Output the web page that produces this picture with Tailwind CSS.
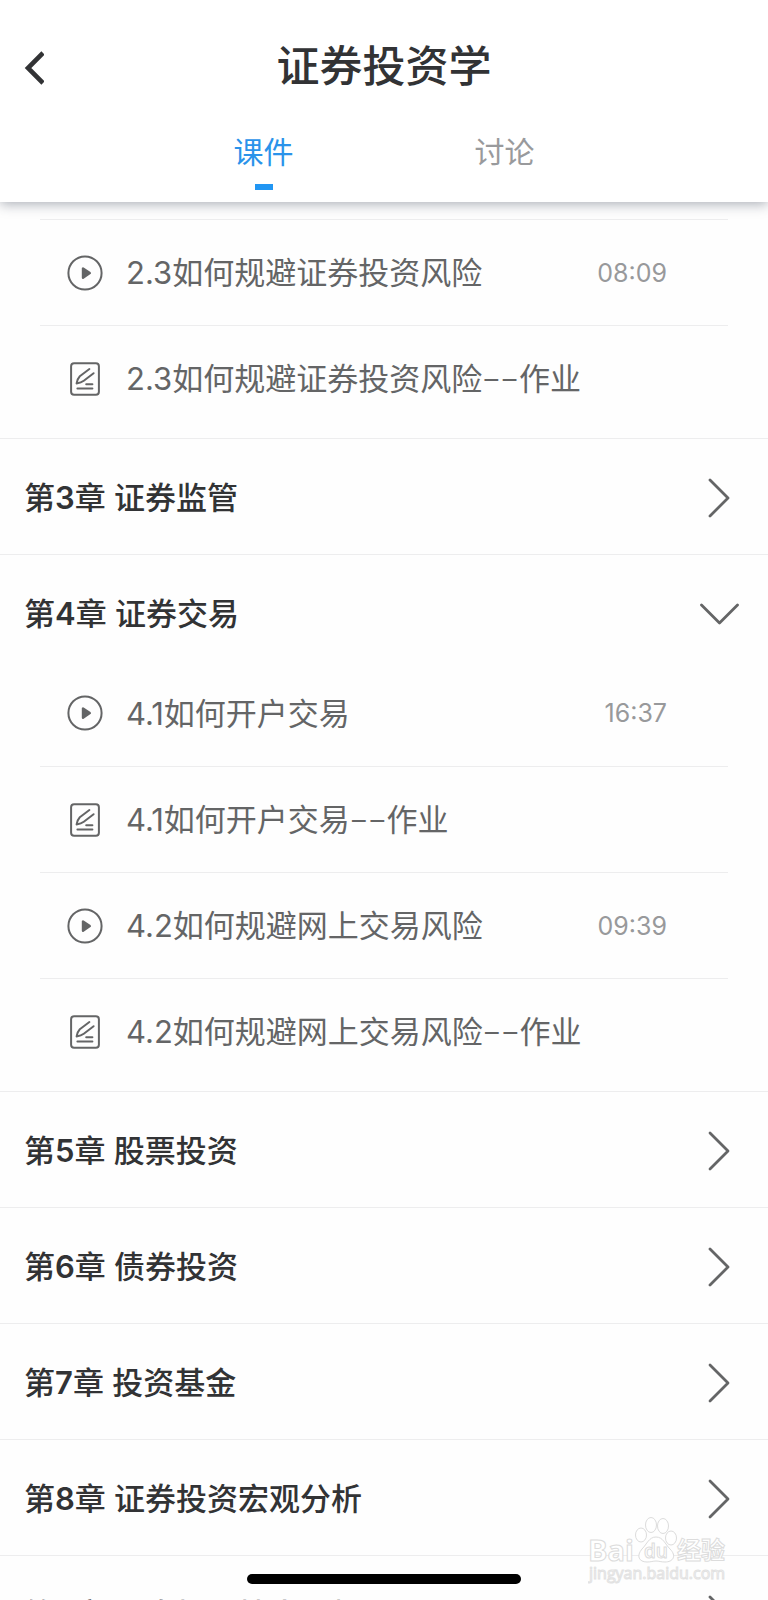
<!DOCTYPE html>
<html lang="zh-CN">
<head>
    <meta charset="UTF-8">
    <meta name="viewport" content="width=device-width, initial-scale=1.0">
    <title>证券投资学</title>
    <script src="https://cdn.jsdelivr.net/npm/@tailwindcss/browser@4"></script>
</head>
<body class="relative flex flex-col h-screen overflow-hidden bg-[#fefefe] font-['Inter','Noto_Sans_CJK_SC',sans-serif] text-[#646566]">

    <!-- Icons -->
    <svg class="hidden">
        <symbol id="icon-play" viewBox="0 0 36 36">
            <circle cx="18" cy="18" r="16.6" fill="none" stroke="currentColor" stroke-width="2" />
            <path d="M16 13.4v9.4l6.8-4.7z" fill="currentColor" stroke="currentColor" stroke-width="2.4" stroke-linejoin="round" />
        </symbol>
        <symbol id="icon-work" viewBox="0 0 36 36">
            <g fill="none" stroke="currentColor" stroke-width="2" stroke-linecap="round" stroke-linejoin="round">
                <rect x="4.1" y="2.3" width="27.8" height="31.4" rx="3" />
                <path d="M22.4 8L12.8 15.2Q10.6 17.5 9.6 22.4Q14.2 21.8 16.8 19.8L26.6 12.2M19.2 23.3H25.4M10.4 27.4H25.4" />
            </g>
        </symbol>
        <symbol id="icon-right" viewBox="0 0 40 40">
            <path d="M10 2L28 20L10 38" fill="none" stroke="currentColor" stroke-width="2.8" stroke-linecap="round" stroke-linejoin="round" />
        </symbol>
        <symbol id="icon-down" viewBox="0 0 40 40">
            <path d="M1.5 11L19.5 29L37.5 11" fill="none" stroke="currentColor" stroke-width="2.8" stroke-linecap="round" stroke-linejoin="round" />
        </symbol>
    </svg>

    <!-- Header -->
    <header class="relative z-10 shrink-0 bg-white pt-9 shadow-[0_2px_12px_rgba(40,50,70,0.4)]">
        <div class="grid grid-cols-[72px_1fr_72px] items-center h-15">
            <button type="button" aria-label="返回" class="pl-6 pt-1 text-[#323335]">
                <svg class="w-5 h-9" viewBox="0 0 20 36" fill="none" stroke="currentColor" stroke-width="4.6">
                    <path d="M19 3L4 18L19 33" />
                </svg>
            </button>
            <h1 class="text-center text-[43px] leading-15 font-medium text-[#323335]">证券投资学</h1>
        </div>
        <nav class="flex justify-center pt-8 pb-3">
            <a href="#course" class="flex flex-col items-center w-[241px] text-[30px] leading-12 text-[#2a93ea]">
                课件
                <span class="mt-2 w-[18px] h-1.5 bg-[#2196f3]"></span>
            </a>
            <a href="#discuss" class="w-[241px] text-center text-[30px] leading-12 text-[#999a9c]">讨论</a>
        </nav>
    </header>

    <!-- Chapter list -->
    <main id="course" class="flex-1 min-h-0 overflow-hidden pt-[17px]">
        <section class="pb-[7px]">
            <ul class="mx-10 text-[31px]">
                <li class="flex items-center h-[106px] pl-[27px] pr-[61px] border-t border-[#ededee]">
                    <svg class="w-9 h-9 mr-[23px]"><use href="#icon-play" /></svg>
                    <a href="#2-3" class="flex-1 pt-0.5">2.3如何规避证券投资风险</a>
                    <span class="pt-0.5 text-[25px] text-[#98999b]">08:09</span>
                </li>
                <li class="flex items-center h-[106px] pl-[27px] pr-[61px] border-t border-[#ededee]">
                    <svg class="w-9 h-9 mr-[23px]"><use href="#icon-work" /></svg>
                    <a href="#2-3-work" class="flex-1 pt-0.5">2.3如何规避证券投资风险<span class="font-['Roboto'] text-[28px]">––</span>作业</a>
                </li>
            </ul>
        </section>

        <section class="border-t border-[#ededee]">
            <button type="button" class="flex w-full items-center justify-between pt-[37px] pb-[34px] pl-6 pr-7 text-[31px] leading-11">
                <span class="font-medium text-[#323335]">第<b class="font-semibold">3</b>章 证券监管</span>
                <svg class="w-10 h-10"><use href="#icon-right" /></svg>
            </button>
        </section>

        <section class="border-t border-[#ededee] pb-[7px]">
            <button type="button" class="flex w-full items-center justify-between pt-[37px] pb-[24px] pl-6 pr-7 text-[31px] leading-11">
                <span class="font-medium text-[#323335]">第<b class="font-semibold">4</b>章 证券交易</span>
                <svg class="w-10 h-10"><use href="#icon-down" /></svg>
            </button>
            <ul class="mx-10 text-[31px]">
                <li class="flex items-center h-[106px] pl-[27px] pr-[61px]">
                    <svg class="w-9 h-9 mr-[23px]"><use href="#icon-play" /></svg>
                    <a href="#4-1" class="flex-1 pt-0.5">4.1如何开户交易</a>
                    <span class="pt-0.5 text-[25px] text-[#98999b]">16:37</span>
                </li>
                <li class="flex items-center h-[106px] pl-[27px] pr-[61px] border-t border-[#ededee]">
                    <svg class="w-9 h-9 mr-[23px]"><use href="#icon-work" /></svg>
                    <a href="#4-1-work" class="flex-1 pt-0.5">4.1如何开户交易<span class="font-['Roboto'] text-[28px]">––</span>作业</a>
                </li>
                <li class="flex items-center h-[106px] pl-[27px] pr-[61px] border-t border-[#ededee]">
                    <svg class="w-9 h-9 mr-[23px]"><use href="#icon-play" /></svg>
                    <a href="#4-2" class="flex-1 pt-0.5">4.2如何规避网上交易风险</a>
                    <span class="pt-0.5 text-[25px] text-[#98999b]">09:39</span>
                </li>
                <li class="flex items-center h-[106px] pl-[27px] pr-[61px] border-t border-[#ededee]">
                    <svg class="w-9 h-9 mr-[23px]"><use href="#icon-work" /></svg>
                    <a href="#4-2-work" class="flex-1 pt-0.5">4.2如何规避网上交易风险<span class="font-['Roboto'] text-[28px]">––</span>作业</a>
                </li>
            </ul>
        </section>

        <section class="border-t border-[#ededee]">
            <button type="button" class="flex w-full items-center justify-between pt-[37px] pb-[34px] pl-6 pr-7 text-[31px] leading-11">
                <span class="font-medium text-[#323335]">第<b class="font-semibold">5</b>章 股票投资</span>
                <svg class="w-10 h-10"><use href="#icon-right" /></svg>
            </button>
        </section>

        <section class="border-t border-[#ededee]">
            <button type="button" class="flex w-full items-center justify-between pt-[37px] pb-[34px] pl-6 pr-7 text-[31px] leading-11">
                <span class="font-medium text-[#323335]">第<b class="font-semibold">6</b>章 债券投资</span>
                <svg class="w-10 h-10"><use href="#icon-right" /></svg>
            </button>
        </section>

        <section class="border-t border-[#ededee]">
            <button type="button" class="flex w-full items-center justify-between pt-[37px] pb-[34px] pl-6 pr-7 text-[31px] leading-11">
                <span class="font-medium text-[#323335]">第<b class="font-semibold">7</b>章 投资基金</span>
                <svg class="w-10 h-10"><use href="#icon-right" /></svg>
            </button>
        </section>

        <section class="border-t border-[#ededee]">
            <button type="button" class="flex w-full items-center justify-between pt-[37px] pb-[34px] pl-6 pr-7 text-[31px] leading-11">
                <span class="font-medium text-[#323335]">第<b class="font-semibold">8</b>章 证券投资宏观分析</span>
                <svg class="w-10 h-10"><use href="#icon-right" /></svg>
            </button>
        </section>

        <section class="border-t border-[#ededee]">
            <button type="button" class="flex w-full items-center justify-between pt-[37px] pb-[34px] pl-6 pr-7 text-[31px] leading-11">
                <span class="font-medium text-[#323335]">第<b class="font-semibold">9</b>章 证券投资技术分析</span>
                <svg class="w-10 h-10"><use href="#icon-right" /></svg>
            </button>
        </section>
    </main>

    <!-- Watermark -->
    <div class="absolute right-10 bottom-4 w-[140px] font-['Open_Sans','Noto_Sans_CJK_SC',sans-serif]">
        <svg class="w-full" viewBox="0 0 140 72" fill="#fff" stroke="#dcdcdc" stroke-width="1">
            <g>
                <ellipse cx="53" cy="23" rx="5.5" ry="7" />
                <ellipse cx="63" cy="13" rx="5.5" ry="7.5" />
                <ellipse cx="75" cy="14" rx="5.5" ry="7.5" />
                <ellipse cx="83" cy="26" rx="5.5" ry="7" />
                <path d="M68 25C75 25 77 32 82 37C89 44 85 50 77 50C73 50 71 49 68 49C65 49 63 50 59 50C51 50 48 44 54 37C59 32 61 25 68 25Z" />
            </g>
            <text x="0" y="49" font-size="29" font-weight="700">Bai</text>
            <text x="56" y="46" font-size="19" font-weight="600">du</text>
            <text x="89" y="47" font-size="24" font-weight="700">经验</text>
            <text x="1" y="67" font-size="16" stroke="#e2e2e2">jingyan.baidu.com</text>
        </svg>
    </div>

    <!-- Home indicator -->
    <div class="absolute inset-x-0 bottom-4 mx-auto w-[274px] h-2.5 rounded-full bg-black"></div>
</body>
</html>
